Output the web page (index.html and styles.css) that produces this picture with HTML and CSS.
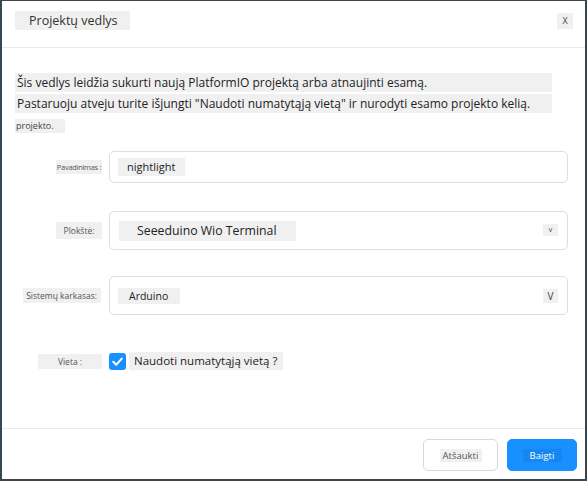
FILE: index.html
```html
<!DOCTYPE html>
<html lang="lt">
<head>
<meta charset="utf-8">
<title>Projektų vedlys</title>
<link rel="stylesheet" href="styles.css">
</head>
<body>
<div class="dialog">
  <header class="dlg-header">
    <span class="title">Projektų vedlys</span>
    <span class="close">X</span>
  </header>
  <main class="dlg-body">
    <p class="intro intro-1">Šis vedlys leidžia sukurti naują PlatformIO projektą arba atnaujinti esamą.</p>
    <p class="intro intro-2">Pastaruoju atveju turite išjungti "Naudoti numatytąją vietą" ir nurodyti esamo projekto kelią.</p>
    <p class="intro-3"><span>projekto.</span></p>

    <div class="row row-name">
      <div class="label-cell"><span class="lbl lbl-name">Pavadinimas :</span></div>
      <div class="field field-input"><span class="val val-name">nightlight</span></div>
    </div>

    <div class="row row-board">
      <div class="label-cell"><span class="lbl lbl-board">Plokštė:</span></div>
      <div class="field field-select">
        <span class="val val-board">Seeeduino Wio Terminal</span>
        <span class="arrow arrow-small">v</span>
      </div>
    </div>

    <div class="row row-fw">
      <div class="label-cell"><span class="lbl lbl-fw">Sistemų karkasas:</span></div>
      <div class="field field-select">
        <span class="val val-fw">Arduino</span>
        <span class="arrow arrow-big">V</span>
      </div>
    </div>

    <div class="row row-loc">
      <div class="label-cell"><span class="lbl lbl-loc">Vieta :</span></div>
      <div class="check-wrap">
        <span class="checkbox">
          <svg viewBox="0 0 17 17" width="17" height="17"><path d="M4.2 8.8 L7.3 11.7 L12.8 5.6" fill="none" stroke="#fff" stroke-width="2" stroke-linecap="round" stroke-linejoin="round"/></svg>
        </span>
        <span class="check-label">Naudoti numatytąją vietą ?</span>
      </div>
    </div>
  </main>
  <footer class="dlg-footer">
    <button class="btn btn-cancel"><span>Atšaukti</span></button>
    <button class="btn btn-ok"><span>Baigti</span></button>
  </footer>
</div>
</body>
</html>
```

FILE: styles.css
```css
* { box-sizing: border-box; }
html, body { margin: 0; padding: 0; background: #fff; }
body { font-family: "Open Sans", "Noto Sans", sans-serif; color: #333; }

.dialog {
  width: 587px;
  height: 481px;
  border: 2px solid #37474f;
  border-top-width: 1px;
  display: flex;
  flex-direction: column;
  background: #fff;
}

.dlg-header {
  height: 47px;
  border-bottom: 1px solid #e9e9e9;
  display: flex;
  align-items: flex-start;
  justify-content: space-between;
  padding: 10px 12px 0 13px;
}
.title {
  background: #f0f0f0;
  font-size: 12.5px;
  line-height: 19px;
  height: 19px;
  padding: 0 12px 0 14px;
  color: #333;
}
.close {
  margin-top: 2px;
  width: 16px;
  height: 16px;
  background: #f0f0f0;
  font-size: 9px;
  line-height: 16px;
  text-align: center;
  color: #444;
}

.dlg-body {
  flex: 1;
  padding: 25px 0 0 13px;
}
.intro {
  margin: 0 33px 2px 0;
  background: #f0f0f0;
  font-size: 12px;
  line-height: 19px;
  height: 19px;
  padding-left: 2px;
  white-space: nowrap;
  color: #222;
}
.intro-3 {
  margin: 6px 0 0 0;
  height: 14px;
  display: flex;
}
.intro-3 span {
  display: block;
  background: #f0f0f0;
  font-size: 9px;
  line-height: 14px;
  height: 14px;
  padding: 0 11px 0 1px;
  color: #444;
}

.row {
  display: flex;
  align-items: center;
  margin-left: -13px;
}
.row-name { margin-top: 18px; }
.row-board { margin-top: 28px; }
.row-fw { margin-top: 26px; }
.row-loc { margin-top: 36px; }

.label-cell {
  width: 100px;
  display: flex;
  justify-content: flex-end;
  flex: none;
}
.lbl {
  background: #f0f0f0;
  color: #555;
  white-space: nowrap;
  text-align: center;
}
.lbl-name { font-size: 7.5px; line-height: 14px; height: 14px; width: 46px; letter-spacing: -0.3px; }
.lbl-board { font-size: 8.5px; line-height: 17px; height: 17px; width: 46px; margin-top: -1px; }
.lbl-fw { font-size: 8.5px; line-height: 15px; height: 15px; padding: 0 4px 0 3px; margin-right: 1px; }
.lbl-loc { font-size: 8.5px; line-height: 15px; height: 15px; width: 64px; margin-top: 1px; }

.field {
  margin-left: 7px;
  width: 459px;
  border: 1px solid #dedede;
  border-radius: 5px;
  display: flex;
  align-items: center;
  flex: none;
}
.field-input { height: 32px; padding-left: 8px; }
.field-select { height: 39px; padding: 0 9px 0 8px; justify-content: space-between; }

.val { background: #f0f0f0; color: #222; white-space: nowrap; }
.val-name { font-size: 11px; line-height: 18px; height: 18px; padding: 0 10px 0 9px; }
.val-board { font-size: 12.3px; line-height: 20px; height: 20px; padding: 0 20px 0 18px; margin-left: 1px; }
.val-fw { font-size: 10.5px; line-height: 16px; height: 16px; padding: 0 12px 0 11px; }

.arrow {
  width: 15px;
  background: #f0f0f0;
  text-align: center;
  color: #444;
}
.arrow-small { font-size: 7px; height: 12px; line-height: 12px; margin-top: -2px; }
.arrow-big { font-size: 10px; height: 14px; line-height: 14px; }

.check-wrap {
  margin-left: 7px;
  display: flex;
  align-items: center;
}
.checkbox {
  width: 17px;
  height: 17px;
  border-radius: 3px;
  background: #1890ff;
  display: block;
  margin-top: 2px;
}
.checkbox svg { display: block; }
.check-label {
  margin-left: 3px;
  background: #f0f0f0;
  font-size: 11.5px;
  line-height: 18px;
  height: 18px;
  padding: 0 6px 0 5px;
  color: #222;
  white-space: nowrap;
}

.dlg-footer {
  height: 51px;
  border-top: 1px solid #e9e9e9;
  display: flex;
  justify-content: flex-end;
  align-items: flex-start;
  padding: 10px 8px 0 0;
  gap: 9px;
}
.btn {
  height: 32px;
  border-radius: 5px;
  font-family: "Open Sans", "Noto Sans", sans-serif;
  display: flex;
  align-items: center;
  justify-content: center;
  padding: 0;
  margin: 0;
}
.btn span { font-size: 9.5px; line-height: 13px; height: 13px; }
.btn-cancel {
  width: 75px;
  background: #fff;
  border: 1px solid #d9d9d9;
}
.btn-cancel span { background: #f0f0f0; color: #555; padding: 0 2px; width: 42px; }
.btn-ok {
  width: 70px;
  background: #1890ff;
  border: 1px solid #1890ff;
}
.btn-ok span { background: #1786f0; color: #fff; width: 39px; }
```
